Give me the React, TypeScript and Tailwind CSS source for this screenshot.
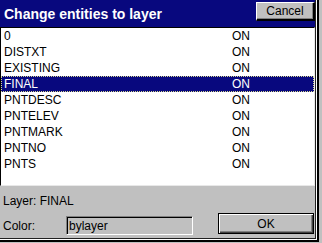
import React from 'react';

const layers = [
  { name: '0', state: 'ON' },
  { name: 'DISTXT', state: 'ON' },
  { name: 'EXISTING', state: 'ON' },
  { name: 'FINAL', state: 'ON' },
  { name: 'PNTDESC', state: 'ON' },
  { name: 'PNTELEV', state: 'ON' },
  { name: 'PNTMARK', state: 'ON' },
  { name: 'PNTNO', state: 'ON' },
  { name: 'PNTS', state: 'ON' },
];

export default function App() {
  const selected = 'FINAL';

  return (
    <div
      className="w-[322px] h-[243px] overflow-hidden bg-[#c0c0c0] text-[12px] text-black"
      style={{ fontFamily: '"Liberation Sans", Arial, sans-serif' }}
    >
      {/* outer frame */}
      <div className="w-[319px] h-[242px] border-r-2 border-b-2 border-black">
        <div className="w-[317px] h-[240px] border-r border-b border-white">
          <div className="flex h-[239px] w-[316px] flex-col border-r border-b border-[#202020]">
            {/* Title bar */}
            <div className="flex h-[27px] shrink-0 items-start justify-between bg-[#08087e] pl-[4px]">
              <span className="mt-[6px] text-[14px] font-bold leading-[16px] text-white">
                Change entities to layer
              </span>
              <button className="mt-[2px] h-[19px] w-[59px] border-t border-l border-white border-r-2 border-b-2 border-r-black border-b-black bg-[#c0c0c0] text-[12px] leading-[14px] shadow-[inset_-1px_-1px_0_#808080]">
                Cancel
              </button>
            </div>

            {/* Layer list */}
            <div className="h-[159px] shrink-0 border-t border-l border-black border-r border-b border-r-[#e8e8e8] border-b-[#e8e8e8] bg-white">
              {layers.map((l) => (
                <div
                  key={l.name}
                  className={`flex h-[16px] items-center pl-[3px] leading-[14px] ${
                    l.name === selected
                      ? 'bg-[#08087e] text-white outline outline-1 -outline-offset-1 outline-dotted outline-[#d8d890]'
                      : ''
                  }`}
                >
                  <span className="w-[228px]">{l.name}</span>
                  <span>{l.state}</span>
                </div>
              ))}
            </div>

            {/* Bottom info */}
            <div className="flex flex-col pt-[4px]">
              <div className="flex h-[22px] items-center pl-[3px] leading-[14px]">Layer: FINAL</div>
              <div className="flex h-[23px] items-start">
                <span className="mt-[7px] w-[66px] pl-[3px] leading-[14px]">Color:</span>
                <div className="mt-[4px] flex h-[19px] w-[127px] items-center border-t border-l border-[#808080] border-b border-r border-b-white border-r-white bg-[#c0c0c0] pl-[2px] leading-[14px] shadow-[inset_1px_1px_0_#000]">
                  bylayer
                </div>
                <button className="ml-[25px] mt-[1px] h-[21px] w-[96px] border border-black bg-[#c0c0c0] text-[12px] leading-[14px] shadow-[inset_1px_1px_0_#fff,inset_-1px_-1px_0_#404040,inset_-2px_-2px_0_#808080]">
                  OK
                </button>
              </div>
            </div>
          </div>
        </div>
      </div>
    </div>
  );
}
